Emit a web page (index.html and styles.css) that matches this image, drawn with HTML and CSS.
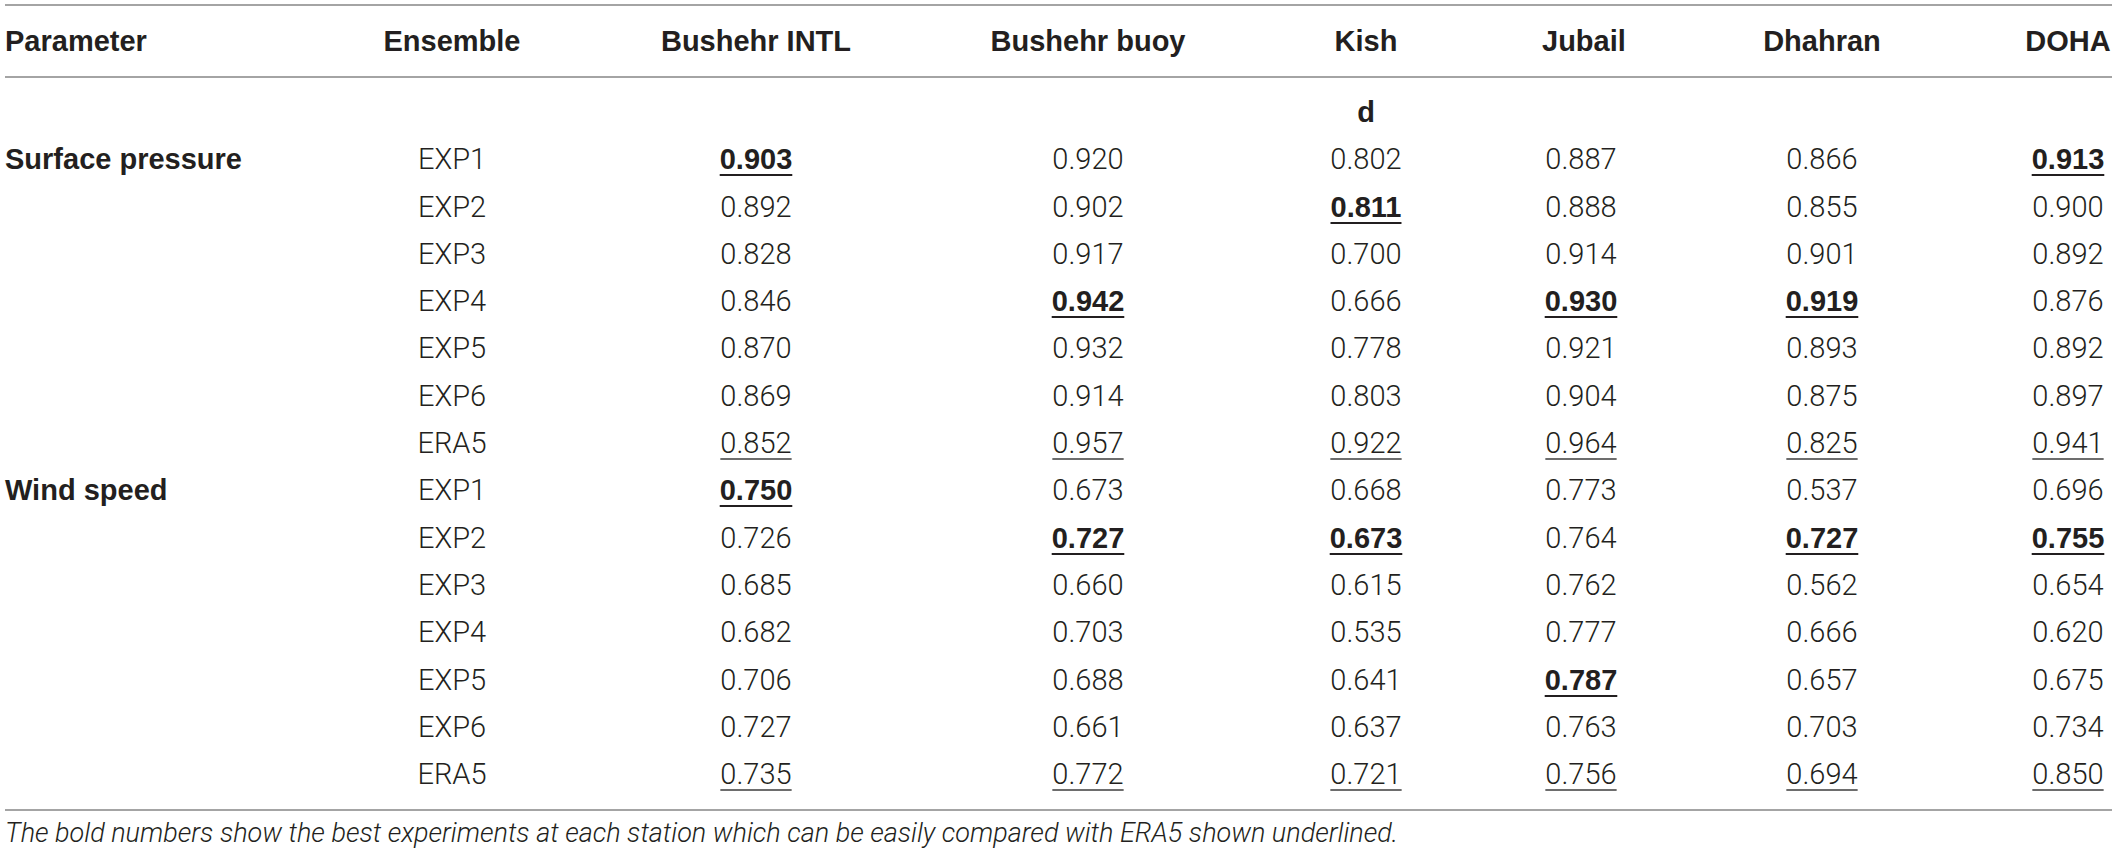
FILE: index.html
```html
<!DOCTYPE html>
<html>
<head>
  <meta charset="utf-8">
  <title>Index of agreement (d)</title>
  <meta name="viewport" content="width=device-width, initial-scale=1">
  <link rel="stylesheet" href="styles.css">
</head>
<body>
  <table class="stats">
    <colgroup>
      <col class="col-param">
      <col class="col-ens">
      <col class="col-intl">
      <col class="col-buoy">
      <col class="col-kish">
      <col class="col-jubail">
      <col class="col-dhahran">
      <col class="col-doha">
    </colgroup>
    <thead>
      <tr>
        <th class="left">Parameter</th>
        <th>Ensemble</th>
        <th>Bushehr INTL</th>
        <th>Bushehr buoy</th>
        <th>Kish</th>
        <th>Jubail</th>
        <th>Dhahran</th>
        <th>DOHA</th>
      </tr>
    </thead>
    <tbody>
      <tr class="first">
        <td></td><td></td><td></td><td></td>
        <td class="metric">d</td>
        <td></td><td></td><td></td>
      </tr>
      <tr>
        <td class="group">Surface pressure</td><td>EXP1</td>
        <td><span class="best">0.903</span></td><td>0.920</td><td>0.802</td><td>0.887</td><td>0.866</td><td><span class="best">0.913</span></td>
      </tr>
      <tr>
        <td></td><td>EXP2</td>
        <td>0.892</td><td>0.902</td><td><span class="best">0.811</span></td><td>0.888</td><td>0.855</td><td>0.900</td>
      </tr>
      <tr>
        <td></td><td>EXP3</td>
        <td>0.828</td><td>0.917</td><td>0.700</td><td>0.914</td><td>0.901</td><td>0.892</td>
      </tr>
      <tr>
        <td></td><td>EXP4</td>
        <td>0.846</td><td><span class="best">0.942</span></td><td>0.666</td><td><span class="best">0.930</span></td><td><span class="best">0.919</span></td><td>0.876</td>
      </tr>
      <tr>
        <td></td><td>EXP5</td>
        <td>0.870</td><td>0.932</td><td>0.778</td><td>0.921</td><td>0.893</td><td>0.892</td>
      </tr>
      <tr>
        <td></td><td>EXP6</td>
        <td>0.869</td><td>0.914</td><td>0.803</td><td>0.904</td><td>0.875</td><td>0.897</td>
      </tr>
      <tr>
        <td></td><td>ERA5</td>
        <td><span class="ref">0.852</span></td><td><span class="ref">0.957</span></td><td><span class="ref">0.922</span></td><td><span class="ref">0.964</span></td><td><span class="ref">0.825</span></td><td><span class="ref">0.941</span></td>
      </tr>
      <tr>
        <td class="group">Wind speed</td><td>EXP1</td>
        <td><span class="best">0.750</span></td><td>0.673</td><td>0.668</td><td>0.773</td><td>0.537</td><td>0.696</td>
      </tr>
      <tr>
        <td></td><td>EXP2</td>
        <td>0.726</td><td><span class="best">0.727</span></td><td><span class="best">0.673</span></td><td>0.764</td><td><span class="best">0.727</span></td><td><span class="best">0.755</span></td>
      </tr>
      <tr>
        <td></td><td>EXP3</td>
        <td>0.685</td><td>0.660</td><td>0.615</td><td>0.762</td><td>0.562</td><td>0.654</td>
      </tr>
      <tr>
        <td></td><td>EXP4</td>
        <td>0.682</td><td>0.703</td><td>0.535</td><td>0.777</td><td>0.666</td><td>0.620</td>
      </tr>
      <tr>
        <td></td><td>EXP5</td>
        <td>0.706</td><td>0.688</td><td>0.641</td><td><span class="best">0.787</span></td><td>0.657</td><td>0.675</td>
      </tr>
      <tr>
        <td></td><td>EXP6</td>
        <td>0.727</td><td>0.661</td><td>0.637</td><td>0.763</td><td>0.703</td><td>0.734</td>
      </tr>
      <tr class="last">
        <td></td><td>ERA5</td>
        <td><span class="ref">0.735</span></td><td><span class="ref">0.772</span></td><td><span class="ref">0.721</span></td><td><span class="ref">0.756</span></td><td><span class="ref">0.694</span></td><td><span class="ref">0.850</span></td>
      </tr>
    </tbody>
    <caption>The bold numbers show the best experiments at each station which can be easily compared with ERA5 shown underlined.</caption>
  </table>
</body>
</html>
```

FILE: styles.css
```css
body {
  margin: 0;
  background: #fff;
  color: #231f20;
  font-family: "Liberation Sans", Arial, sans-serif;
}

.stats {
  width: 2107px;
  margin: 4px 0 0 5px;
  table-layout: fixed;
  border-collapse: separate;
  border-spacing: 0;
  font-size: 29px;
}

.col-param { width: 373px; }
.col-ens { width: 148px; }
.col-intl { width: 460px; }
.col-buoy { width: 204px; }
.col-kish { width: 352px; }
.col-jubail { width: 78px; }
.col-dhahran { width: 404px; }
.col-doha { width: 88px; }

.stats th {
  height: 70px;
  padding: 0;
  line-height: 70px;
  font-weight: 700;
  text-align: center;
  white-space: nowrap;
  border-top: 2px solid #a4a4a4;
  border-bottom: 2px solid #a4a4a4;
}

.stats th.left {
  text-align: left;
}

.stats td {
  padding: 0;
  line-height: 47.3px;
  text-align: center;
  white-space: nowrap;
  font-family: Roboto, "Liberation Sans", sans-serif;
  font-weight: 300;
}

.stats tr.first td {
  padding-top: 11px;
}

.stats tr.last td {
  padding-bottom: 11px;
  border-bottom: 2px solid #a4a4a4;
}

.stats td.group,
.stats td.metric {
  font-family: "Liberation Sans", Arial, sans-serif;
  font-weight: 700;
}

.stats td.group {
  text-align: left;
}

.best {
  font-family: "Liberation Sans", Arial, sans-serif;
  font-weight: 700;
  text-decoration: underline;
  text-decoration-thickness: 2px;
  text-underline-offset: 5px;
}

.ref {
  text-decoration: underline;
  text-decoration-thickness: 2px;
  text-decoration-color: #6d6d6d;
  text-underline-offset: 5px;
}

.stats caption {
  caption-side: bottom;
  padding-top: 6px;
  text-align: left;
  font-family: Roboto, "Liberation Sans", sans-serif;
  font-weight: 300;
  font-style: italic;
  font-size: 27px;
  white-space: nowrap;
}
```
